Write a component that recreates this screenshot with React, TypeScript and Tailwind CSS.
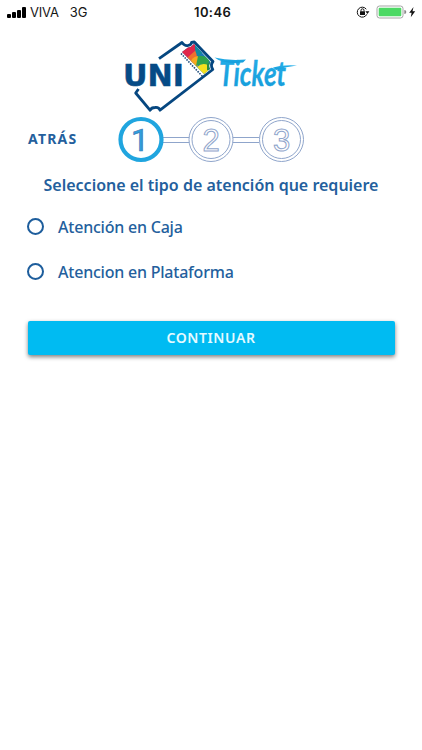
import React from "react";

function StatusBar() {
  return (
    <header className="relative flex h-6 items-center justify-between pl-[7px] pr-[6px] font-['Inter',sans-serif] text-[13px] text-[#161616]">
      <div className="flex items-center">
        <svg width="19" height="11" viewBox="0 0 19 11" fill="#000">
          <rect x="0" y="7" width="4" height="4" rx="1" />
          <rect x="5" y="5" width="4" height="6" rx="1" />
          <rect x="10" y="3" width="4" height="8" rx="1" />
          <rect x="15" y="0" width="4" height="11" rx="1" />
        </svg>
        <span className="ml-[4px] pt-px tracking-[-0.2px]">VIVA</span>
        <span className="ml-[11px] pt-px">3G</span>
      </div>
      <span className="absolute left-[194px] pt-px font-semibold tracking-[0.4px]">10:46</span>
      <svg width="60" height="14" viewBox="0 0 60 14">
        <path d="M10.3 4.2A5 5 0 1 0 10.8 9.3" fill="none" stroke="#111" strokeWidth="1" />
        <path d="M9.4 6.2h4L11.4 9z" fill="#111" />
        <rect x="4" y="6.3" width="5" height="3.8" rx=".5" fill="#111" />
        <path d="M5 6.5V5.3a1.5 1.5 0 0 1 3 0v1.2" fill="none" stroke="#111" />
        <rect x="21" y="1" width="26" height="12" rx="2.5" fill="#fff" stroke="#a5a5a5" />
        <rect x="22.7" y="2.7" width="22.6" height="8.6" rx="1" fill="#4cd964" />
        <path d="M48.3 5a2 2 0 0 1 0 4z" fill="#888" />
        <path d="M57.500 2 53.200 7.800h2.400l-.8 4.400 4.400-6h-2.700z" fill="#111" />
      </svg>
    </header>
  );
}

function Logo() {
  return (
    <svg className="ml-[116px] block" width="189" height="80" viewBox="0 0 189 80">
      <defs>
        <linearGradient id="brush" x1="0" y1="0" x2="0" y2="1">
          <stop offset="0" stopColor="#27b0ea" />
          <stop offset="1" stopColor="#149bd9" />
        </linearGradient>
        <clipPath id="flag">
          <path d="M66 16 72 11.500Q75 11.500 78 8L94.500 26Q92 29.500 94 33L88 38Z" />
        </clipPath>
      </defs>
      <path
        d="M43 22.700 66 6.500Q69 10.500 72 9.500Q75.500 8.800 75.500 6.500L78.300 6 97 25.500Q94 29 96.800 33.500L44 74.200Q43 71 39 71.500Q35.500 71.500 34 74.200L19.700 57 22.500 53"
        fill="none"
        stroke="#064780"
        strokeWidth="2.800"
        strokeLinejoin="round"
      />
      <g clipPath="url(#flag)">
        <path d="M60 2h40v38H60z" fill="#1b78b8" />
        <path d="M64 16 72 6h7l1 8-8 9z" fill="#e0264a" />
        <path d="M71 22 80 14l1 8-5 6z" fill="#f0702c" />
        <path d="M75 25Q77 20 84 20L81 32z" fill="#f5a81f" />
        <path d="M80 6Q77 14 82 20L89 15z" fill="#128a9e" />
        <path d="M82 20Q88 19 94 23L91 30Q84 27 80 30z" fill="#2fa24c" />
        <path d="M81 31Q86 26 92 29L92 40 86 39z" fill="#f4e01e" />
        <path d="M91 28 96 25 96 36 91 34z" fill="#2c8b45" />
      </g>
      <path d="M65 17.500 86.500 40.500" stroke="#194978" strokeWidth="1.600" strokeDasharray="1.500 1.200" />
      <text x="7" y="49.500" textLength="61" lengthAdjust="spacingAndGlyphs" fontFamily="DejaVu Sans" fontWeight="700" fontSize="31" fill="#064b86" stroke="#064b86" strokeWidth=".5">UNI</text>
      <text x="103" y="50" textLength="67" lengthAdjust="spacingAndGlyphs" fontFamily="Lato" fontStyle="italic" fontWeight="700" fontSize="34" fill="url(#brush)" stroke="#1da4e2" strokeWidth=".3">Ticket</text>
      <g fill="url(#brush)">
        <path d="M98.500 21.500Q112 25 130 23.500L127 26.500Q107 28.500 98.500 21.500Z" />
        <path d="M157 31.500Q167 28.500 181 29.500Q170 30.500 160 34Z" />
      </g>
    </svg>
  );
}

function Steps() {
  return (
    <svg width="188" height="48" viewBox="0 0 188 48" fontSize="31" textAnchor="middle">
      <g fill="none" stroke="#8fa5cb" strokeWidth="1">
        <path d="M45 21.500h26M45 26.500h26M115 21.500h26M115 26.500h26" />
        <circle cx="93" cy="23.500" r="22" />
        <circle cx="93" cy="23.500" r="19" />
        <circle cx="163.500" cy="23.500" r="22" />
        <circle cx="163.500" cy="23.500" r="19" />
      </g>
      <circle cx="23" cy="23.500" r="20.500" fill="#fff" stroke="#20a5df" strokeWidth="4.200" />
      <text x="22" y="34.500" fontFamily="Roboto" fontSize="32" fill="#2fa0de" stroke="#3a76b3" strokeWidth=".7">1</text>
      <g fill="#fff" stroke="#8fa5cb" strokeWidth="1" fontFamily="Liberation Sans">
        <text x="93" y="34.500">2</text>
        <text x="163.500" y="34.500">3</text>
      </g>
    </svg>
  );
}

function Option({ label }: { label: string }) {
  return (
    <label className="flex h-[45px] items-center">
      <input type="radio" name="tipo" className="m-0 size-[17px] shrink-0 appearance-none rounded-full border-2 border-[#1d5d9c]" />
      <span className="ml-[14px] whitespace-nowrap text-[16px] font-medium tracking-[-0.22px]">{label}</span>
    </label>
  );
}

export default function App() {
  return (
    <div className="h-[750px] w-full bg-white font-['Noto_Sans',sans-serif] text-[#245f9d]">
      <StatusBar />
      <main className="pt-3">
        <Logo />
        <div className="flex h-[48px] items-center">
          <button className="ml-[28px] w-[90px] shrink-0 pb-[3px] text-left text-[14px] font-bold tracking-[1.2px]">ATRÁS</button>
          <Steps />
        </div>
        <h1 className="mt-[9px] text-center text-[16px] font-semibold leading-6 whitespace-nowrap">Seleccione el tipo de atención que requiere</h1>
        <div className="ml-[27px] mt-[7px]">
          <Option label="Atención en Caja" />
          <Option label="Atencion en Plataforma" />
        </div>
        <button className="ml-[27.5px] mt-[27px] block h-[34px] w-[367px] rounded-[2px] bg-[#00bbf2] pb-[2px] text-[14px] font-semibold tracking-[0.6px] text-[#e5faff] shadow-[0_2px_4px_rgba(0,0,0,0.5)]">CONTINUAR</button>
      </main>
    </div>
  );
}
